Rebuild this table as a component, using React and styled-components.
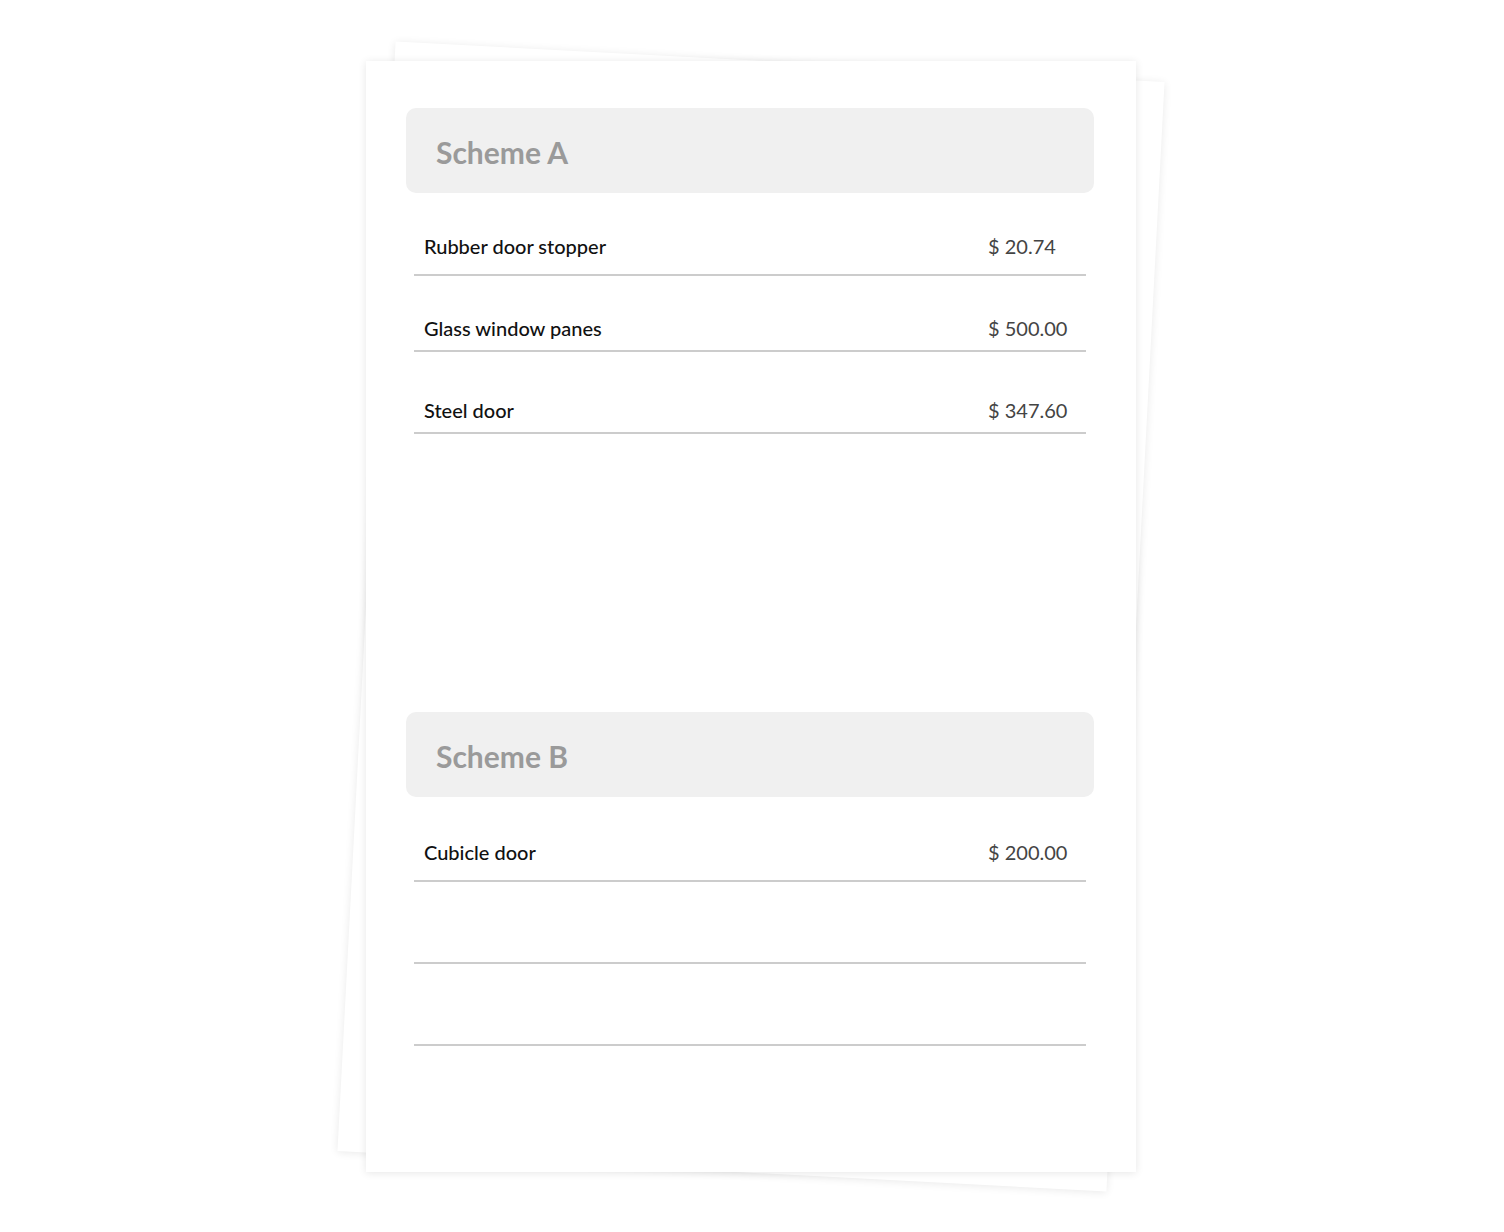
import React from 'react';
import styled, { createGlobalStyle } from 'styled-components';

const GlobalStyle = createGlobalStyle`
  body {
    margin: 0;
    background: #ffffff;
    font-family: Lato, "Open Sans", sans-serif;
  }
`;

const schemes = [
    {
        name: 'Scheme A',
        rows: [
            { label: 'Rubber door stopper', price: '$ 20.74', height: 83, pad: 16 },
            { label: 'Glass window panes', price: '$ 500.00', height: 76, pad: 10 },
            { label: 'Steel door', price: '$ 347.60', height: 82, pad: 10 },
        ],
    },
    {
        name: 'Scheme B',
        rows: [
            { label: 'Cubicle door', price: '$ 200.00', height: 85, pad: 16 },
            { height: 82, pad: 10 },
            { height: 82, pad: 10 },
        ],
    },
];

const App = () => {
    return (
        <Page>
            <GlobalStyle />
            <Stack>
                <BackSheet />
                <Paper>
                    {schemes.map((scheme) => (
                        <Section key={scheme.name}>
                            <SchemeHeader>
                                <SchemeTitle>{scheme.name}</SchemeTitle>
                            </SchemeHeader>
                            <RowList>
                                {scheme.rows.map((row, i) => (
                                    <Row key={i} $height={row.height} $pad={row.pad}>
                                        <ItemName>{row.label}</ItemName>
                                        <ItemPrice>{row.price}</ItemPrice>
                                    </Row>
                                ))}
                            </RowList>
                        </Section>
                    ))}
                </Paper>
            </Stack>
        </Page>
    );
};

export default App;

const Page = styled.div`
    width: 1504px;
    height: 1232px;
    display: flex;
    justify-content: center;
    padding: 61px 2px 0 0;
    box-sizing: border-box;
`;

const Stack = styled.div`
    position: relative;
    width: 770px;
    height: 1111px;
`;

const BackSheet = styled.div`
    position: absolute;
    inset: 0;
    background: #ffffff;
    transform: rotate(3deg);
    box-shadow: 0 1px 8px rgba(0, 0, 0, 0.09);
`;

const Paper = styled.div`
    position: relative;
    width: 770px;
    height: 1111px;
    box-sizing: border-box;
    padding: 47px 42px 0 40px;
    background: #ffffff;
    box-shadow: 0 1px 8px rgba(0, 0, 0, 0.1);
    display: flex;
    flex-direction: column;
    gap: 278px;
`;

const Section = styled.div`
    display: flex;
    flex-direction: column;
`;

const SchemeHeader = styled.div`
    height: 85px;
    background: #f0f0f0;
    border-radius: 10px;
    display: flex;
    align-items: center;
    padding: 0 30px;
`;

const SchemeTitle = styled.h2`
    margin: 0;
    padding-top: 3px;
    font-size: 30px;
    font-weight: 700;
    color: #9a9a9a;
`;

const RowList = styled.div`
    display: flex;
    flex-direction: column;
    padding: 0 8px;
`;

const Row = styled.div`
    height: ${(p) => p.$height}px;
    box-sizing: border-box;
    border-bottom: 2px solid #cccccc;
    display: flex;
    align-items: flex-end;
    padding: 0 10px ${(p) => p.$pad}px 10px;
    font-size: 20px;
    line-height: 24px;
`;

const ItemName = styled.span`
    flex: 1;
    color: #111111;
    font-weight: 500;
`;

const ItemPrice = styled.span`
    width: 88px;
    color: #444444;
`;
